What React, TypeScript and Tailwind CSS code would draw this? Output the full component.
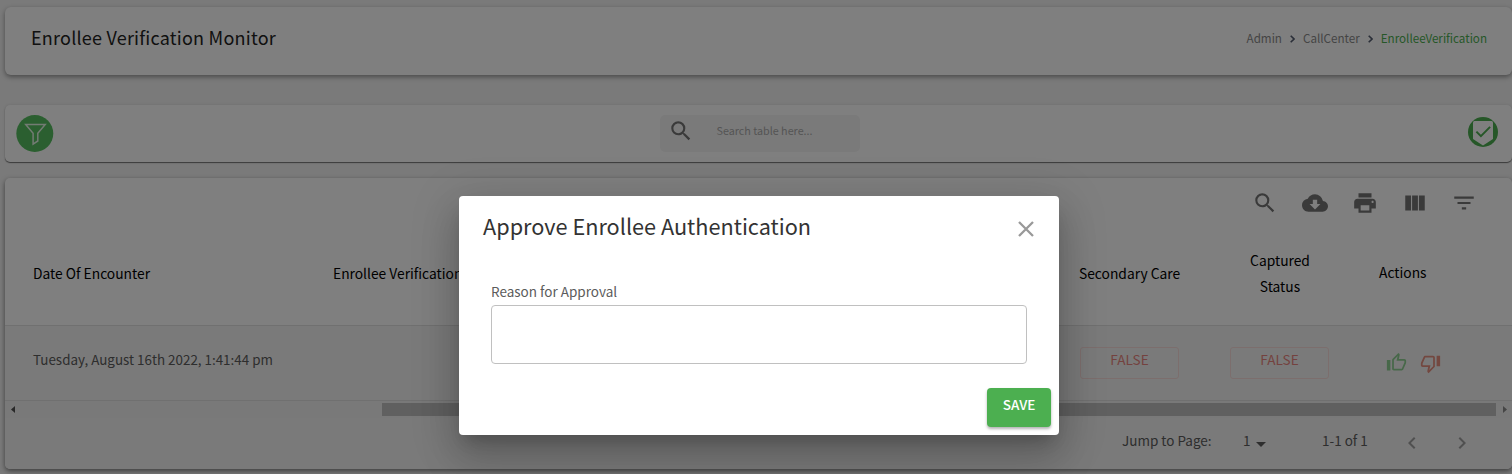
import type { ReactNode } from "react";
import {
  MdArrowDropDown,
  MdChevronLeft,
  MdChevronRight,
  MdCloudDownload,
  MdFilterList,
  MdPrint,
  MdSearch,
  MdViewColumn,
} from "react-icons/md";

const THUMB =
  "M9 21h9c.83 0 1.54-.5 1.84-1.22l3.02-7.05c.09-.23.14-.47.14-.73v-2c0-1.1-.9-2-2-2h-6.31l.95-4.57.03-.32c0-.41-.17-.79-.44-1.06L14.17 1 7.58 7.59C7.22 7.95 7 8.45 7 9v10c0 1.1.9 2 2 2zM9 9l4.34-4.34L12 10h9v2l-3 7H9V9zM1 9h4v12H1V9z";

function Header() {
  return (
    <header className="flex h-[68px] shrink-0 items-start justify-between rounded-md bg-white pl-[26px] pr-[25px] shadow-[0_2px_5px_rgba(0,0,0,0.4)]">
      <h1 className="mt-4 text-[18px] leading-7 tracking-[0.22px] text-[#222]">Enrollee Verification Monitor</h1>
      <nav className="mt-[21px] flex items-center text-[11.65px] leading-5 text-[#8a8a8a]">
        <span>Admin</span>
        <Crumb />
        <span>CallCenter</span>
        <Crumb />
        <span className="text-[#4caf50]">EnrolleeVerification</span>
      </nav>
    </header>
  );
}

function Crumb() {
  return (
    <svg className="mx-2 mt-0.5 h-2 w-[5px] text-[#555d70]" viewBox="0 0 5 8" fill="none" stroke="currentColor" strokeWidth="1.6">
      <path d="M.7.7 4 4 .7 7.3" />
    </svg>
  );
}

function FilterBar() {
  return (
    <section className="mt-[30px] flex h-[57px] shrink-0 items-start rounded-[5px] bg-white pl-[11px] pr-[14px] shadow-[0_1px_1px_rgba(0,0,0,0.5),0_0_3px_rgba(0,0,0,0.1)]">
      <svg className="mt-[9px] size-[38px]" viewBox="0 0 38 38">
        <circle cx="18.8" cy="19.5" r="18.5" fill="#56bf60" />
        <path d="M9.7 10.5H29.2L21.8 19.3V27L17.1 30.1V19.3Z" fill="none" stroke="#fff" strokeOpacity=".85" strokeWidth="1.5" />
      </svg>
      <div className="ml-[606px] mt-2.5 flex h-[37px] w-[200px] rounded-[5px] bg-[#f5f5f5]">
        <MdSearch className="ml-2 mt-[3px] size-[26px] text-[#757575]" />
        <span className="ml-[22.5px] mt-2 text-[10.75px] leading-4 text-[#aaa]">Search table here...</span>
      </div>
      <svg className="ml-auto mt-3 size-[30px]" viewBox="0 0 30 30">
        <circle cx="15" cy="15" r="15" fill="#4caf50" />
        <path d="M6.5 4H23.5Q25 4 25 5.5V22L15 28.4 5 22V5.5Q5 4 6.5 4Z" fill="#fff" />
        <path d="m8.4 14.6 4.5 4.5 9.2-9.2" fill="none" stroke="#4caf50" strokeWidth="2" />
      </svg>
    </section>
  );
}

function HeadCell({ className, children }: { className: string; children?: ReactNode }) {
  return <div className={`shrink-0 whitespace-nowrap text-[13.8px] leading-[26px] text-black ${className}`}>{children}</div>;
}

function StatusChip() {
  return (
    <div className="ml-[0.5px] mt-[21px] h-[32px] w-[99px] rounded-[3px] border border-[#f8dcda] pl-px text-center text-[13.6px] leading-[22px] text-[#e8857f]">
      FALSE
    </div>
  );
}

function TableCard() {
  return (
    <section className="mt-4 flex h-[291px] shrink-0 flex-col rounded-[5px] bg-white shadow-[0_2px_5px_rgba(0,0,0,0.5)]">
      <div className="flex h-[50px] items-center justify-end pr-[35px] text-[#757575]">
        <MdSearch className="mr-6 size-[26px]" />
        <MdCloudDownload className="mr-6 size-[26px]" />
        <MdPrint className="mr-6 size-[26px]" />
        <MdViewColumn className="mr-[23px] size-[26px]" />
        <MdFilterList className="size-[26px]" />
      </div>
      <div className="flex h-[98px] border-b border-[#e0e0e0] pl-7">
        <HeadCell className="w-[300px] pt-[32px]">Date Of Encounter</HeadCell>
        <HeadCell className="w-[746px] pt-[32px]">Enrollee Verification</HeadCell>
        <HeadCell className="w-[150px] pt-[32px]">Secondary Care</HeadCell>
        <HeadCell className="w-[102px] pt-[19px] text-center">Captured<br />Status</HeadCell>
        <HeadCell className="ml-12 pt-[31px]">Actions</HeadCell>
      </div>
      <div className="flex h-[75px] border-b border-[#e0e0e0] bg-[#f5f5f5] pl-7">
        <div className="w-[1046px] pt-[20px] text-[13.4px] leading-[26px] text-[#5c5c5c]">
          Tuesday, August 16th 2022, 1:41:44 pm
        </div>
        <div className="w-[150px]"><StatusChip /></div>
        <div className="w-[156px]"><StatusChip /></div>
        <svg className="ml-[0.5px] mt-[26px] size-[21px] text-[#8fd093]" viewBox="0 0 24 24" fill="currentColor"><path d={THUMB} /></svg>
        <svg className="ml-[13px] mt-[27px] size-[21px] rotate-180 text-[#e69080]" viewBox="0 0 24 24" fill="currentColor"><path d={THUMB} /></svg>
      </div>
      <div className="flex h-[17px] items-center bg-[#f3f3f3] pl-[6px] pr-[5px]">
        <svg className="h-[7px] w-1" viewBox="0 0 4 7"><path d="M4 0v7L0 3.5z" fill="#505050" /></svg>
        <div className="ml-[367px] h-[13px] w-[1114px] bg-[#c1c1c1]" />
        <svg className="ml-[7px] h-[7px] w-1" viewBox="0 0 4 7"><path d="M0 0v7l4-3.5z" fill="#8a8a8a" /></svg>
      </div>
      <div className="flex flex-1 items-start rounded-b-[5px] bg-[#f4f4f4] pl-[1117px] pt-[9px] text-[13.5px] leading-[26px] text-[#5c5c5c]">
        <span className="w-[121px] whitespace-nowrap">Jump to Page:</span>
        <span className="w-[7px]">1</span>
        <MdArrowDropDown className="ml-[-1px] mt-[5px] size-6" />
        <span className="ml-[49px] w-[69px] whitespace-nowrap">1-1 of 1</span>
        <MdChevronLeft className="ml-[9px] mt-1 size-6 text-[#a0a0a0]" />
        <MdChevronRight className="ml-[26px] mt-1 size-6 text-[#a0a0a0]" />
      </div>
    </section>
  );
}

function ApproveDialog() {
  return (
    <div className="absolute inset-0 bg-black/50 pl-[459px] pt-[196px]">
      <div
        role="dialog"
        className="flex h-[239px] w-[600px] flex-col rounded bg-white shadow-[0_11px_15px_-7px_rgba(0,0,0,0.2),0_24px_38px_3px_rgba(0,0,0,0.14),0_9px_46px_8px_rgba(0,0,0,0.12)]"
      >
        <div className="flex justify-between pl-6 pr-[25px]">
          <h2 className="mt-[14px] text-[21.7px] leading-8 text-[#333]">Approve Enrollee Authentication</h2>
          <svg className="mt-[25px] size-4" viewBox="0 0 16 16" stroke="#999" strokeWidth="2.3" fill="none">
            <path d="m1 1 14 14M15 1 1 15" />
          </svg>
        </div>
        <label className="mt-9 px-8 text-[13.5px] leading-[26px] text-[#5c5c5c]">Reason for Approval</label>
        <textarea className="mx-8 mt-px h-[59px] resize-none rounded border border-[#c0c0c0] bg-white" />
        <button className="ml-auto mr-2 mt-6 h-[39px] w-16 rounded bg-[#4caf50] pb-[7px] text-[13.5px] font-medium leading-[26px] text-white shadow-[0_2px_3px_rgba(0,0,0,0.3)]">
          SAVE
        </button>
      </div>
    </div>
  );
}

export default function App() {
  return (
    <main className="relative flex h-[474px] w-full flex-col overflow-hidden bg-[#f4f4f4] pl-[5px] pt-[7px] font-['Noto_Sans_CJK_SC',sans-serif]">
      <Header />
      <FilterBar />
      <TableCard />
      <ApproveDialog />
    </main>
  );
}
